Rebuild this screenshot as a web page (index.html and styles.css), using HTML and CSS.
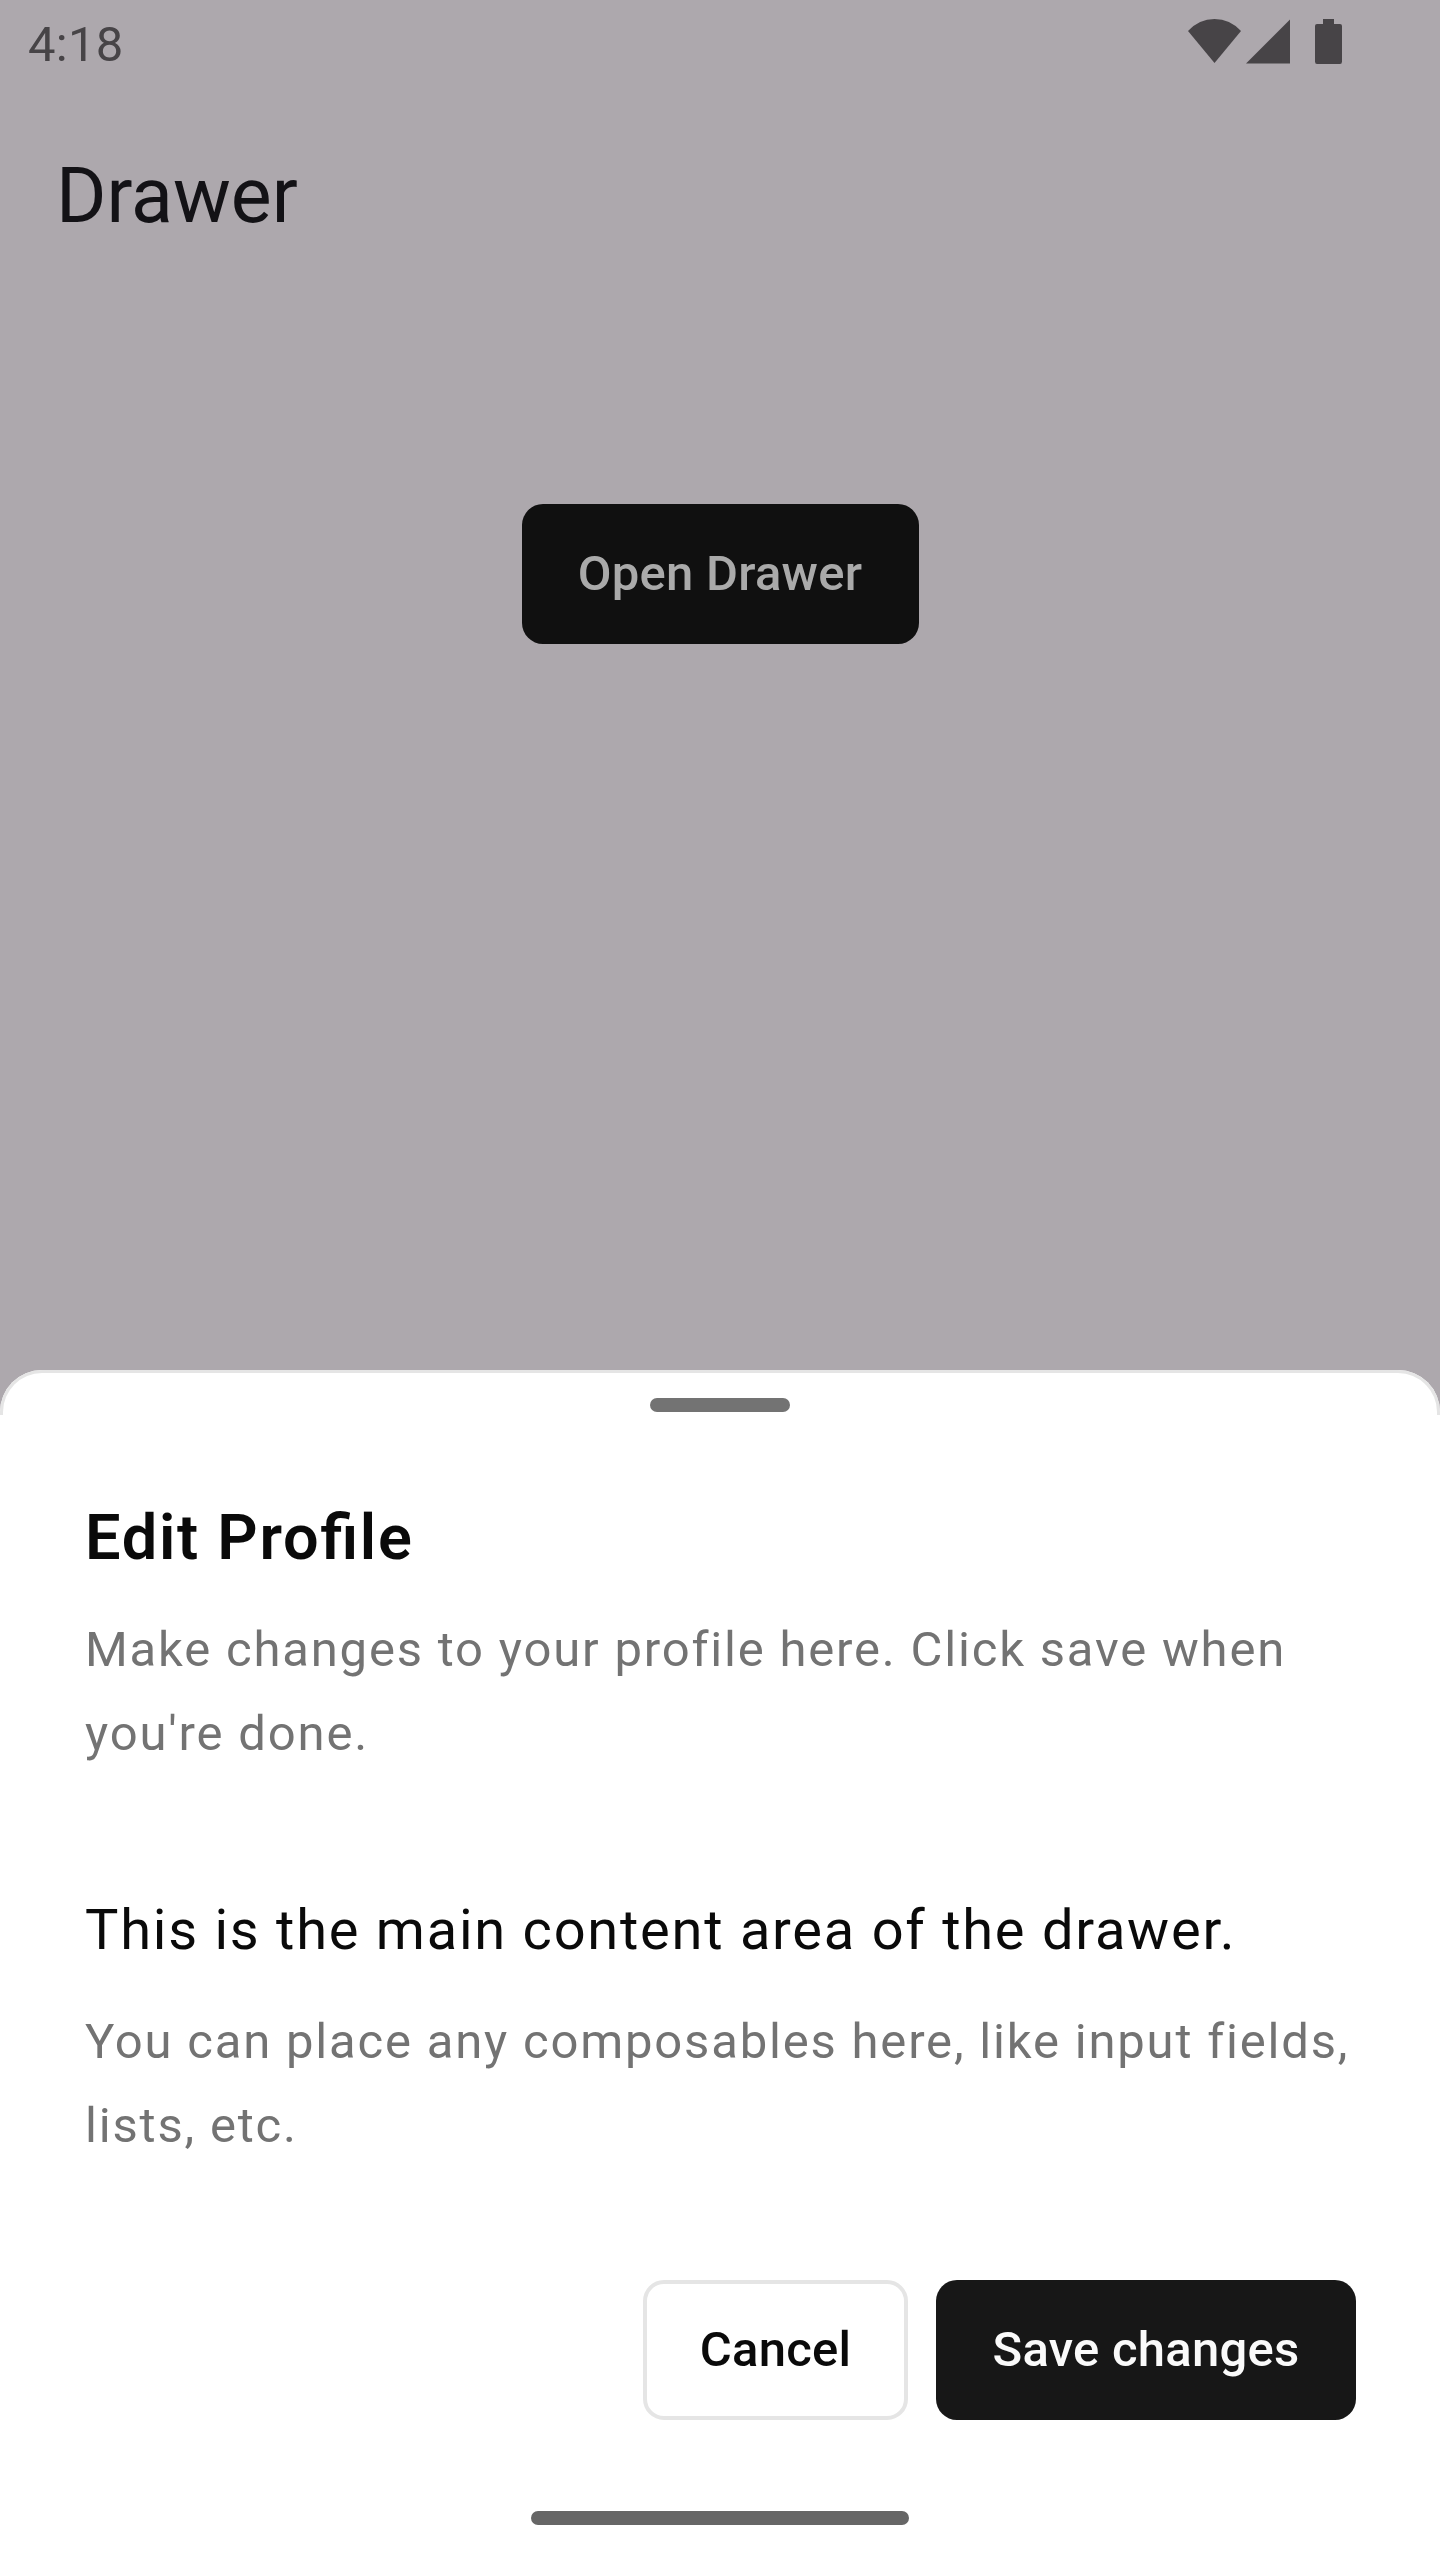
FILE: index.html
```html
<!DOCTYPE html>
<html lang="en">
<head>
<meta charset="utf-8">
<title>Drawer</title>
<link rel="stylesheet" href="styles.css">
</head>
<body>
<main class="screen">
  <header class="status">
    <span class="clock">4:18</span>
    <svg class="status-icons" width="160" height="48" viewBox="0 0 160 48">
      <path d="M0 13Q11 1 26.500 1Q42 1 53 13L26.500 45Z"/>
      <path d="M58 45.500L102 1.500V45.500Z"/>
      <path d="M135 1H146V6H152Q154 6 154 8V43.500Q154 46 152 46H129Q127 46 127 43.500V8Q127 6 129 6H135Z"/>
    </svg>
  </header>
  <h1 class="title">Drawer</h1>
  <button class="btn open">Open Drawer</button>
  <section class="sheet">
    <div class="handle"></div>
    <h2 class="heading">Edit Profile</h2>
    <p class="muted intro">Make changes to your profile here. Click save when you're done.</p>
    <p class="lead">This is the main content area of the drawer.</p>
    <p class="muted">You can place any composables here, like input fields, lists, etc.</p>
    <div class="actions">
      <button class="btn outline">Cancel</button>
      <button class="btn primary">Save changes</button>
    </div>
    <div class="nav-pill"></div>
  </section>
</main>
</body>
</html>
```
FILE: styles.css
```css
* { box-sizing: border-box; margin: 0; padding: 0; }
body { font-family: Roboto, sans-serif; background: #ada8ad; }
.screen { width: 1440px; height: 2560px; display: flex; flex-direction: column; overflow: hidden; background: #ada8ad; }
.status { height: 84px; padding: 18px 92px 0 28px; display: flex; justify-content: space-between; align-items: flex-start; color: #474447; }
.clock { font-size: 49px; line-height: 54px; letter-spacing: 0.3px; }
.status-icons { fill: #474447; }
.title { height: 224px; padding: 63px 56px 0; font-size: 77px; line-height: 98px; font-weight: 400; color: #131216; }
.btn { height: 140px; padding-bottom: 2px; border: 0; border-radius: 21px; font: 500 49px Roboto, sans-serif; letter-spacing: 0.25px; }
.open { width: 397px; margin: 196px auto 0; background: #101010; color: #aaa; }
.sheet { position: relative; height: 1190px; margin-top: auto; padding: 28px 84px 0; display: flex; flex-direction: column; background: #fff; border-radius: 42px 42px 0 0; }
/* Outline along the rounded top edge only */
.sheet::before { content: ""; position: absolute; inset: 0 0 auto; height: 42px; border: 3px solid #e5e5e5; border-bottom: 0; border-radius: 42px 42px 0 0; }
.handle { width: 140px; height: 14px; border-radius: 7px; background: #737373; margin: 0 auto; }
.heading, .muted, .lead { padding-left: 1px; }
.heading { margin-top: 84px; font-size: 63px; line-height: 84px; font-weight: 600; letter-spacing: 1.75px; color: #0a0a0a; font-feature-settings: "liga" 1; }
.muted { margin-top: 28px; font-size: 49px; line-height: 84px; letter-spacing: 1.81px; color: #737373; }
.lead { margin-top: 112px; font-size: 56px; line-height: 84px; letter-spacing: 1.75px; color: #0a0a0a; }
.actions { display: flex; justify-content: flex-end; gap: 28px; margin-top: 112px; }
.outline { width: 265px; border: 4px solid #e5e5e5; background: #fff; color: #0a0a0a; }
.primary { width: 420px; background: #171717; color: #fafafa; }
.nav-pill { width: 378px; height: 14px; border-radius: 7px; background: #666; margin: 91px auto 0; }
```
